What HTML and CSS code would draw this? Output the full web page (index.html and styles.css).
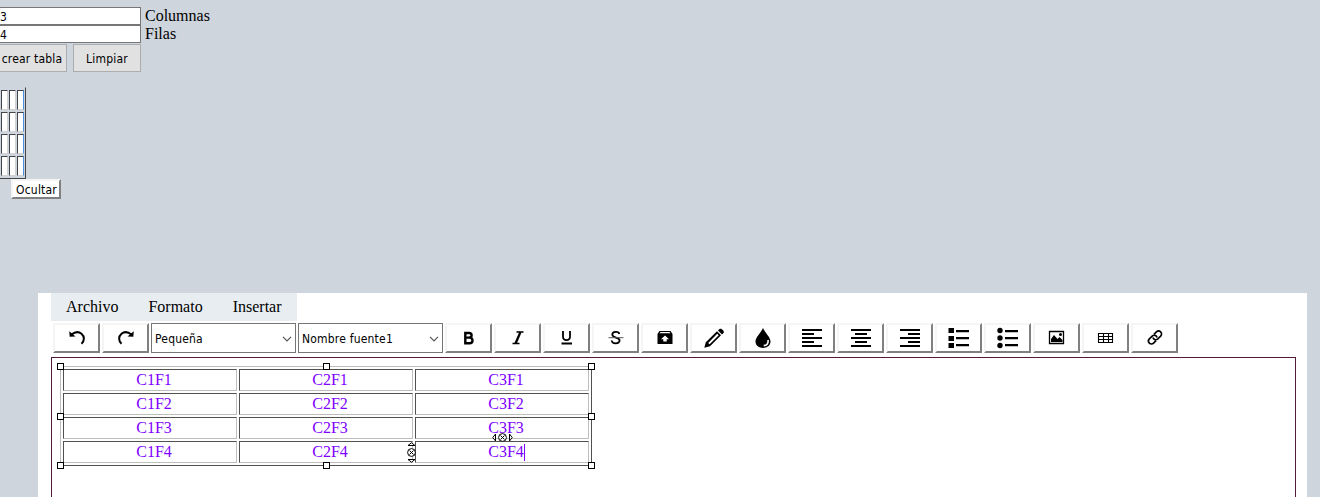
FILE: index.html
```html
<!DOCTYPE html>
<html lang="es">
<head>
<meta charset="utf-8">
<title>Editor</title>
<link rel="stylesheet" href="styles.css">
</head>
<body>
<section class="creator">
  <div class="field"><input class="num" value="3"><label>Columnas</label></div>
  <div class="field"><input class="num" value="4"><label>Filas</label></div>
  <div class="actions"><button class="flat create">crear tabla</button><button class="flat clear">Limpiar</button></div>
  <table class="preview">
    <tr><td></td><td></td><td></td></tr>
    <tr><td></td><td></td><td></td></tr>
    <tr><td></td><td></td><td></td></tr>
    <tr><td></td><td></td><td></td></tr>
  </table>
  <button class="hide">Ocultar</button>
</section>
<main class="editor">
  <nav class="menu"><span>Archivo</span><span>Formato</span><span>Insertar</span></nav>
  <div class="toolbar">
    <button class="tool"><svg viewBox="0 0 20 20"><path d="M4.500 6.500C8 3.800 12 3.700 14.500 5.800C17.800 8.500 17.500 13 14.500 15.800" fill="none" stroke="#000" stroke-width="2"/><path d="M2.200 3.200l.5 5.600 5.800-.3z"/></svg></button>
    <button class="tool"><svg viewBox="0 0 20 20"><path d="M15.500 6.500C12 3.800 8 3.700 5.500 5.800C2.200 8.500 2.500 13 5.500 15.800" fill="none" stroke="#000" stroke-width="2"/><path d="M17.800 3.200l-.5 5.600-5.800-.3z"/></svg></button>
    <div class="select"><span>Pequeña</span><svg class="chevron" viewBox="0 0 10 6"><path d="M1 .8l4 4 4-4" fill="none" stroke="#555" stroke-width="1.200"/></svg></div>
    <div class="select"><span>Nombre fuente1</span><svg class="chevron" viewBox="0 0 10 6"><path d="M1 .8l4 4 4-4" fill="none" stroke="#555" stroke-width="1.200"/></svg></div>
    <button class="tool"><svg viewBox="0 0 20 20"><path d="M6.300 5h3.700c3.500 0 3.500 4.600 0 4.600H6.300h4.200c4 0 4 5.700 0 5.700H6.300z" fill="none" stroke="#000" stroke-width="2.400"/></svg></button>
    <button class="tool"><svg viewBox="0 0 20 20"><path d="M8.500 4h7M4.500 15.500h7" stroke="#000" stroke-width="1.400"/><path d="M12.500 4l-5 11.500" stroke="#000" stroke-width="2.300"/></svg></button>
    <button class="tool"><svg viewBox="0 0 20 20"><path d="M6 3v5.500c0 4.700 7 4.700 7 0V3M4.500 15.500h10.500" fill="none" stroke="#000" stroke-width="1.800"/></svg></button>
    <button class="tool"><svg viewBox="0 0 20 20"><path d="M13.300 6C12.800 3 6.300 3.200 6.300 6.500C6.300 10.500 13.600 8.800 13.600 12.600C13.600 16.200 6 16.200 5.700 12.500" fill="none" stroke="#000" stroke-width="1.800"/><path d="M2.500 9.700h15" stroke="#555"/></svg></button>
    <button class="tool"><svg viewBox="0 0 20 20"><path d="M4.500 3h11l2 3v10h-15V6zM4.500 5.300h11l-1-1.200h-9zM10 7.500l-4 3.700h2.300v2.300h3.400v-2.300H14z" fill-rule="evenodd"/></svg></button>
    <button class="tool"><svg viewBox="0 0 20 20"><path d="M1.800 14.300L13 3.200l4 4L6 18.300L.3 19.700zM4.200 14.900l1.400 1.400L14.700 7.200l-1.500-1.500z" fill-rule="evenodd"/><path d="M14 2.500l1.500-1.500c1.500-1.500 5.500 2 4 4L18 6.500z"/></svg></button>
    <button class="tool"><svg viewBox="0 0 20 20"><path d="M10 0C8 5 2.500 9 2.500 13.500C2.500 22 17.500 22 17.500 13.500C17.500 9 12 5 10 0z"/><path d="M15 12c.7 3-1 5.500-4.300 5.700" fill="none" stroke="#fff" stroke-width="1.700"/></svg></button>
    <button class="tool"><svg viewBox="0 0 20 20"><path d="M0 2h20M0 6h12M0 10h20M0 14h12M0 18h20" class="rule"/></svg></button>
    <button class="tool"><svg viewBox="0 0 20 20"><path d="M0 2h20M4 6h12M0 10h20M4 14h12M0 18h20" class="rule"/></svg></button>
    <button class="tool"><svg viewBox="0 0 20 20"><path d="M0 2h20M8 6h12M0 10h20M8 14h12M0 18h20" class="rule"/></svg></button>
    <button class="tool"><svg viewBox="0 0 20 20"><path d="M-.5 0h5.500v5h-5.500zM-.5 8h5.500v5h-5.500zM-.5 15h5.500v5h-5.500zM7 2h13v2.200H7zM7 9h13v2.200H7zM7 16h13v2.200H7z"/></svg></button>
    <button class="tool"><svg viewBox="0 0 20 20"><circle cx="2" cy="2.500" r="2.700"/><circle cx="2" cy="10" r="2.700"/><circle cx="2" cy="17.500" r="2.700"/><path d="M7 2h13v2.200H7zM7 9h13v2.200H7zM7 16h13v2.200H7z"/></svg></button>
    <button class="tool"><svg viewBox="0 0 20 20"><path d="M2.500 3.500h14v12h-14z" fill="none" stroke="#000" stroke-width="1.300"/><path d="M4 14v-3l3-4 3.500 4 2-2 3 3v2z"/><circle cx="13.500" cy="6.500" r="1.500"/></svg></button>
    <button class="tool"><svg viewBox="0 0 20 20"><path d="M2.500 5.500h14v9h-14zM2.500 8.500h14M2.500 11.500h14M7.500 5.500v9M12.500 5.500v9" fill="none" stroke="#000" stroke-width="1.100"/></svg></button>
    <button class="tool"><svg viewBox="0 0 20 20"><g fill="none" stroke="#000" stroke-width="1.600" transform="rotate(-45 10 9.500)"><path d="M8.500 12.500H5a3 3 0 0 1 0-6h4a3 3 0 0 1 2.500 4.500"/><path d="M11.500 6.500H15a3 3 0 0 1 0 6h-4a3 3 0 0 1-2.500-4.500"/></g></svg></button>
  </div>
  <div class="page">
    <div class="selection">
      <table class="content">
        <tr><td>C1F1</td><td>C2F1</td><td>C3F1</td></tr>
        <tr><td>C1F2</td><td>C2F2</td><td>C3F2</td></tr>
        <tr><td>C1F3</td><td>C2F3</td><td>C3F3</td></tr>
        <tr><td>C1F4</td><td>C2F4</td><td>C3F4<i class="caret"></i></td></tr>
      </table>
      <i class="handle left top"></i><i class="handle center top"></i><i class="handle right top"></i>
      <i class="handle left middle"></i><i class="handle right middle"></i>
      <i class="handle left bottom"></i><i class="handle center bottom"></i><i class="handle right bottom"></i>
      <svg class="grip horizontal" viewBox="0 0 21 9"><path d="M3.500 1v7L.8 4.500zM17.500 1v7l2.700-3.500z" fill="#fff" stroke="#000"/><circle cx="10.500" cy="4.500" r="3.900" fill="#fff" stroke="#000"/><path d="M8.500 2.500l4 4m0-4l-4 4" stroke="#000"/></svg>
      <svg class="grip vertical" viewBox="0 0 9 21"><path d="M1 3.500h7L4.500.8zM1 17.500h7l-3.500 2.700z" fill="#fff" stroke="#000"/><circle cx="4.500" cy="10.500" r="3.900" fill="#fff" stroke="#000"/><path d="M2.500 8.500l4 4m0-4l-4 4" stroke="#000"/></svg>
    </div>
  </div>
</main>
</body>
</html>
```
FILE: styles.css
```css
* { box-sizing: border-box; }
body { margin: 0; height: 497px; overflow: hidden; background: #ced5dd; font: 16px "Liberation Serif", serif; color: #000; }
button, input, .select { font: 12px "DejaVu Sans Condensed", "DejaVu Sans", sans-serif; font-stretch: condensed; letter-spacing: .2px; color: #000; border-radius: 0; white-space: nowrap; }
.creator { height: 293px; padding-top: 7px; }
.field { display: flex; height: 18px; gap: 4px; line-height: 18px; }
.num { width: 142px; margin-left: -1px; height: 18px; padding: 1px 0 0; border: 1px solid #767676; background: #fff; }
.actions { display: flex; gap: 6px; margin-top: 1px; }
.flat { height: 28px; padding: 2px 0 0; border: 1px solid #adadad; background: #e1e1e1; }
.create { width: 71px; margin-left: -4px; padding-left: 1px; }
.clear { width: 68px; }
.preview { width: 27px; height: 92px; margin: 15px 0 0 -1px; border: 1px solid; border-color: #ced5dd #42444a #42444a #ced5dd; border-spacing: 1px 2px; border-collapse: separate; }
.preview td { width: 7px; height: 20px; padding: 0; background: #fff; border: 1px solid; border-color: #42444a #d2d2d2 #d2d2d2 #42444a; }
.preview td:last-child { border-right-color: #4a90e2; }
.hide { display: block; width: 50px; height: 20px; margin-left: 11px; padding: 2px 0 0 1px; background: #fff; border: 2px solid; border-color: #f5f5f5 #808080 #808080 #f5f5f5; line-height: 14px; }
.editor { width: 1269px; height: 204px; margin-left: 38px; padding: 0 11px 0 13px; background: #fff; }
.menu { display: flex; gap: 30px; width: 246px; height: 28px; padding-left: 15px; line-height: 28px; background: #e8edf1; }
.toolbar { display: flex; gap: 2px; padding: 2px 0 4px 2px; }
.tool { display: flex; flex: none; align-items: center; justify-content: center; width: 47px; height: 30px; padding: 0; background: #fff; border: 2px solid; border-color: #f5f5f5 #808080 #808080 #f5f5f5; }
.tool svg { width: 20px; height: 20px; overflow: visible; }
.rule { stroke: #000; stroke-width: 2; }
.select { display: flex; flex: none; align-items: center; justify-content: space-between; width: 145px; height: 30px; padding: 2px 3px 0; border: 1px solid #767676; background: #fff; }
.chevron { width: 10px; height: 6px; }
.page { height: 160px; padding: 8px; border: 1px solid #521c38; }
.selection { position: relative; width: 532px; height: 100px; }
.content { width: 532px; height: 100px; table-layout: fixed; border: 1px solid; border-color: #bdbdbd #505050 #505050 #bdbdbd; border-spacing: 2px; border-collapse: separate; color: #8000ff; text-align: center; }
.content td { height: 22px; padding: 0 0 0 8px; line-height: 20px; border: 1px solid; border-color: #505050 #bdbdbd #bdbdbd #505050; }
.caret { display: inline-block; width: 1px; height: 17px; margin-right: -1px; background: #8000ff; vertical-align: -4px; }
.handle { position: absolute; width: 7px; height: 7px; border: 1px solid #000; background: #fff; }
.left { left: -3px; } .center { left: 263px; } .right { left: 528px; }
.top { top: -3px; } .middle { top: 47px; } .bottom { top: 96px; }
.grip { position: absolute; }
.horizontal { left: 432px; top: 67px; width: 21px; height: 9px; }
.vertical { left: 347px; top: 76px; width: 9px; height: 21px; }
```
